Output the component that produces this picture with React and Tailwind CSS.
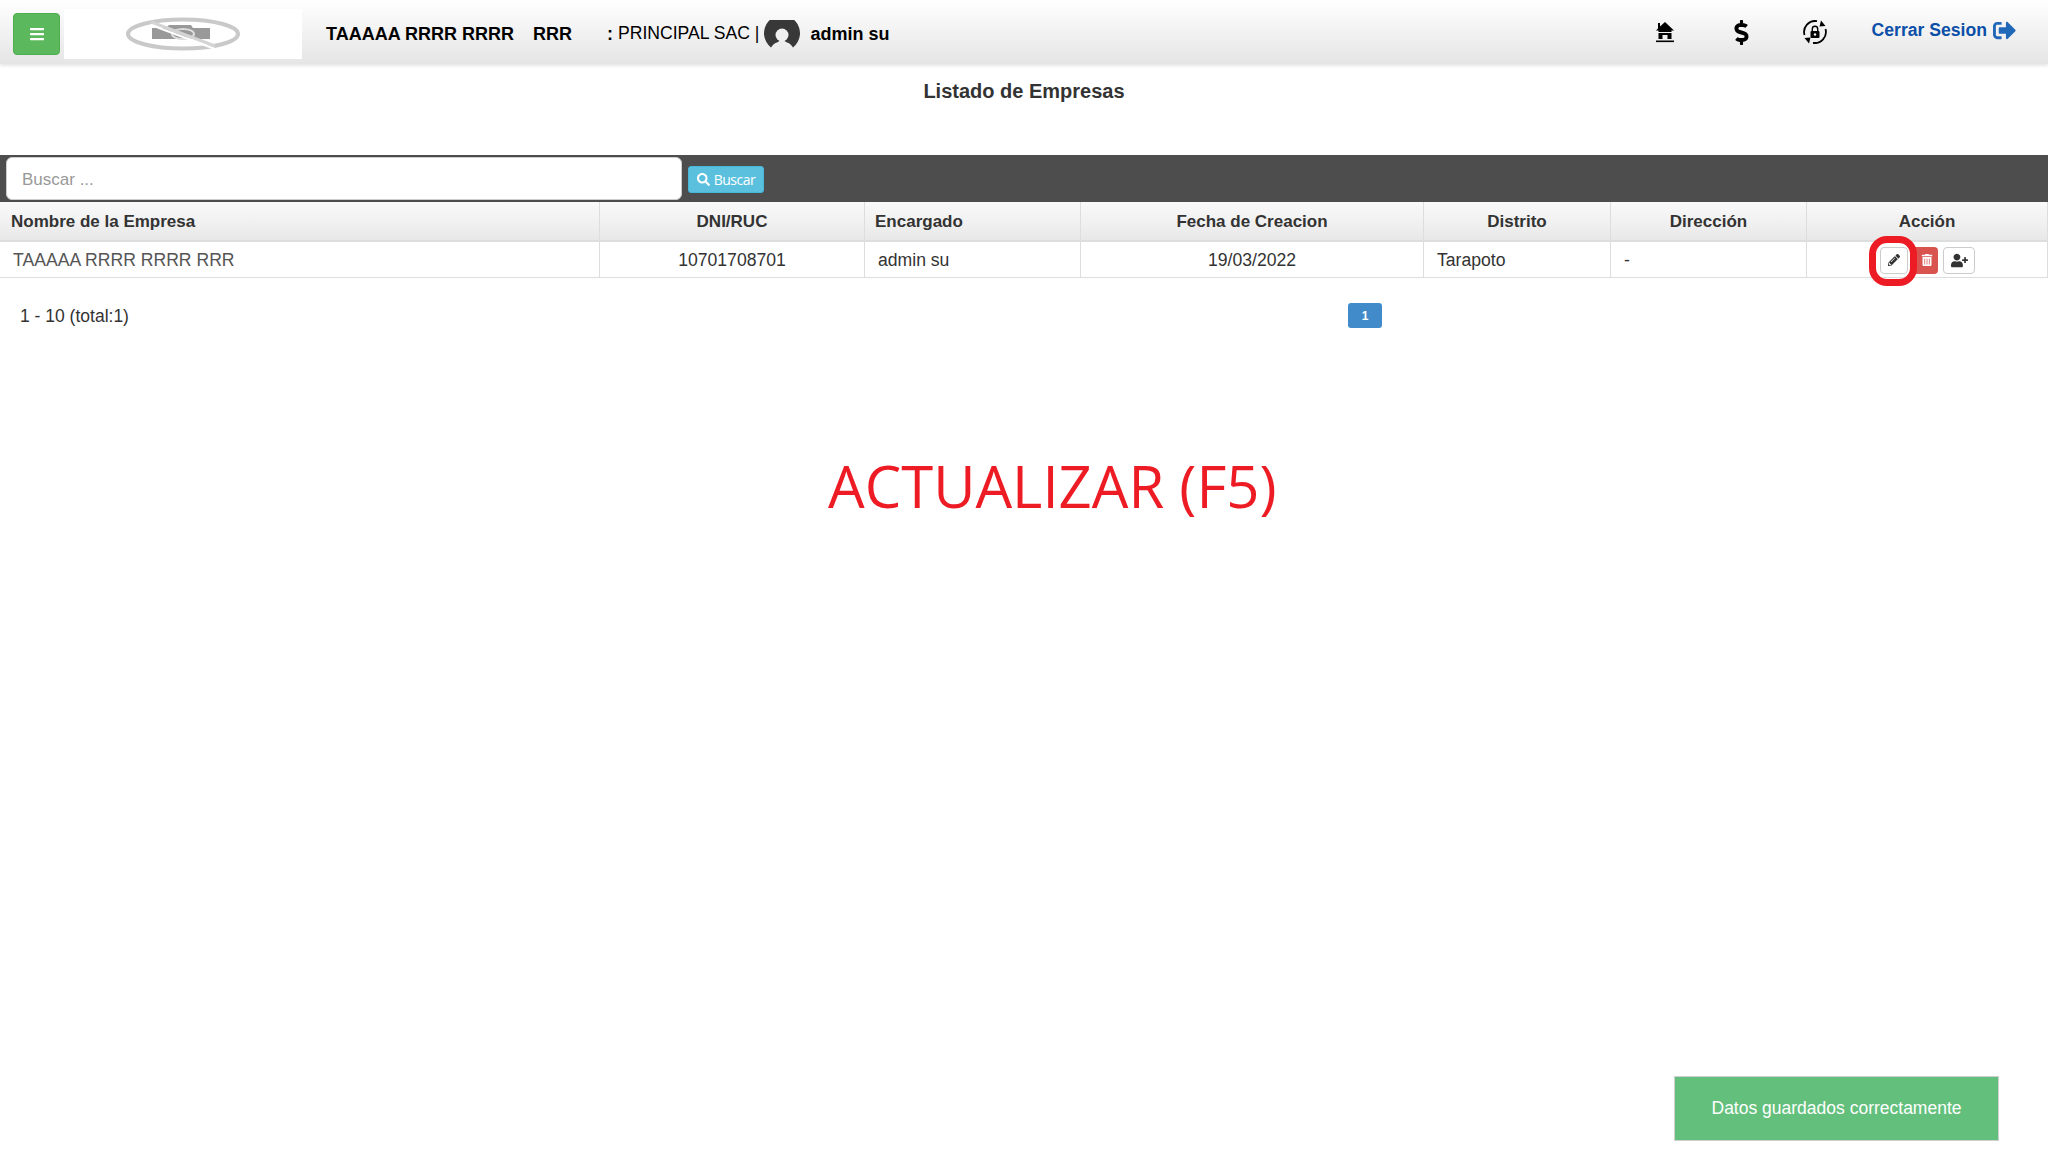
import React from 'react';
import { FaBars, FaDollarSign, FaSearch, FaPencilAlt, FaTrashAlt, FaUserPlus, FaSignOutAlt } from 'react-icons/fa';

const columns = [
  { label: 'Nombre de la Empresa', width: 'w-[600px]', head: 'text-left pl-[11px]' },
  { label: 'DNI/RUC', width: 'w-[265px]', head: 'text-center' },
  { label: 'Encargado', width: 'w-[216px]', head: 'text-left pl-[10px]' },
  { label: 'Fecha de Creacion', width: 'w-[343px]', head: 'text-center' },
  { label: 'Distrito', width: 'w-[187px]', head: 'text-center' },
  { label: 'Dirección', width: 'w-[196px]', head: 'text-center' },
  { label: 'Acción', width: 'flex-1', head: 'text-center' },
];

const LogoPlaceholder = () => (
  <svg width="116" height="34" viewBox="0 0 116 34">
    <ellipse cx="58" cy="17" rx="55" ry="14.5" fill="none" stroke="#c9c9c9" strokeWidth="4" />
    <path d="M27 11h14l3-3h22l2 3h17v11H27z" fill="#999" />
    <ellipse cx="58" cy="17" rx="11" ry="5" fill="none" stroke="#ddd" strokeWidth="2" />
    <path d="M26 5l64 24" stroke="#d4d4d4" strokeWidth="3" />
    <path d="M26 8l64 24" stroke="#fff" strokeWidth="2" />
  </svg>
);

const Avatar = () => (
  <svg width="36" height="30" viewBox="0 0 36 30">
    <path d="M7 27.5A18 18 0 1 1 29 27.5C27 24.5 25 23 23 22.5A8 8 0 0 0 13 22.5C11 23 9 24.5 7 27.5z" fill="#383838" />
    <circle cx="18" cy="15" r="6.5" fill="#f0f0f0" />
  </svg>
);

const HomeIcon = () => (
  <svg width="20" height="24" viewBox="0 0 20 24" fill="#000">
    <path d="M10 2l9 8.5h-2.5V12h-13v-1.5H1L3 8.5V3h2v3.5z" />
    <path d="M3.5 13h13v6h-4v-4h-5v4h-4z" />
    <rect x="1" y="20.5" width="18" height="1.6" />
  </svg>
);

const LockRotate = () => (
  <svg width="26" height="26" viewBox="0 0 26 26" fill="none">
    <path d="M2.5 16A11 11 0 0 1 15 2.2" stroke="#000" strokeWidth="1.8" />
    <path d="M23.5 10A11 11 0 0 1 11 23.8" stroke="#000" strokeWidth="1.8" />
    <path d="M19 1.5l4.5 5.5-6 .5z M7 24.5l-4.5-5.5 6-.5z" fill="#000" />
    <rect x="8.5" y="12" width="9" height="7" rx="1" fill="#000" />
    <circle cx="13" cy="15.5" r="1.2" fill="#f2f2f2" />
    <path d="M10.3 12V10a2.7 2.7 0 0 1 5.4 0v2" stroke="#000" strokeWidth="1.4" />
  </svg>
);

const Navbar = () => (
  <header className="h-[64px] pt-[4px] flex items-center bg-gradient-to-b from-white to-[#e6e5e5] shadow-[0_1px_4px_rgba(0,0,0,0.15)] font-['Liberation_Sans',sans-serif] text-black">
    <button className="ml-[13px] w-[47px] h-[42px] rounded-[4px] bg-[#5cb85c] border border-[#4cae4c] flex items-center justify-center text-white">
      <FaBars size={16} />
    </button>
    <div className="ml-[4px] w-[238px] h-[50px] bg-white flex items-center justify-center">
      <LogoPlaceholder />
    </div>
    <div className="ml-[24px] flex items-center text-[18px] leading-none">
      <b>TAAAAA RRRR RRRR</b>
      <b className="ml-[19px]">RRR</b>
      <b className="ml-[35px]">:</b>
      <span className="ml-[5px] text-[17.6px]">PRINCIPAL SAC |</span>
      <span className="ml-[5px] mt-[2px]"><Avatar /></span>
      <b className="ml-[10px]">admin su</b>
    </div>
    <div className="ml-auto -mt-[4px] flex items-center mr-[32px]">
      <span className="ml-[1px]"><HomeIcon /></span>
      <span className="ml-[54px]"><FaDollarSign size={25} /></span>
      <span className="ml-[48px]"><LockRotate /></span>
      <a className="ml-[44px] flex items-center text-[17.6px] font-bold text-[#0b4fa8] -mt-[3px]">
        Cerrar Sesion
        <FaSignOutAlt size={23} className="ml-[6px] text-[#2268b8]" />
      </a>
    </div>
  </header>
);

const ActionButtons = () => (
  <div className="flex items-center h-full pl-[73px] pt-[1px]">
    <div className="relative z-10">
      <button className="w-[28px] h-[27px] rounded-[4px] bg-white border border-[#cccccc] flex items-center justify-center text-[#333]">
        <FaPencilAlt size={12} />
      </button>
      {/* Marca roja sobre el boton editar */}
      <div className="absolute -left-[11px] -top-[11px] w-[48px] h-[50px] rounded-[18px] border-[7px] border-[#ed1c24]"></div>
    </div>
    <button className="ml-[2px] w-[28px] h-[27px] pl-[6px] rounded-[4px] bg-[#d9534f] flex items-center justify-center text-white">
      <FaTrashAlt size={12} />
    </button>
    <button className="ml-[5px] w-[32px] h-[27px] rounded-[4px] bg-white border border-[#cccccc] flex items-center justify-center text-[#333]">
      <FaUserPlus size={17} />
    </button>
  </div>
);

const Table = () => (
  <div className="text-[#333]">
    <div className="flex h-[40px] bg-gradient-to-b from-[#fafafa] to-[#e8e8e8] border-b-2 border-[#dddddd]">
      {columns.map((col) => (
        <div key={col.label} className={`${col.width} ${col.head} border-r border-[#dddddd] text-[17px] font-bold leading-[39px]`}>
          {col.label}
        </div>
      ))}
    </div>
    <div className="flex h-[36px] border-b border-[#dddddd] text-[17.6px] leading-[37px]">
      <div className="w-[600px] pl-[13px] border-r border-[#dddddd] text-[#555]">TAAAAA RRRR RRRR RRR</div>
      <div className="w-[265px] text-center border-r border-[#dddddd]">10701708701</div>
      <div className="w-[216px] pl-[13px] border-r border-[#dddddd]">admin su</div>
      <div className="w-[343px] text-center border-r border-[#dddddd]">19/03/2022</div>
      <div className="w-[187px] pl-[13px] border-r border-[#dddddd]">Tarapoto</div>
      <div className="w-[196px] pl-[13px] border-r border-[#dddddd]">-</div>
      <div className="flex-1 border-r border-[#dddddd]"><ActionButtons /></div>
    </div>
  </div>
);

const App = () => {
  return (
    <div className="relative min-h-[1152px] bg-white font-['Liberation_Sans',sans-serif]">
      <Navbar />

      <h1 className="h-[91px] pt-[15px] text-center text-[20px] leading-[24px] font-bold text-[#333]">
        Listado de Empresas
      </h1>

      {/* Buscador */}
      <div className="h-[47px] bg-[#4d4d4d] flex items-center pl-[6px]">
        <div className="w-[676px] h-[43px] bg-white rounded-[6px] border border-[#cccccc] pl-[15px] pt-[2px] flex items-center text-[17px] text-[#999]">
          Buscar ...
        </div>
        <button className="ml-[6px] w-[76px] h-[27px] mt-[2px] rounded-[3px] bg-[#5bc0de] border border-[#46b8da] flex items-center justify-center text-white text-[14px] font-['Open_Sans',sans-serif]">
          <FaSearch size={13} className="mr-[4px]" />
          <span className="tracking-[-0.5px]">Buscar</span>
        </button>
      </div>

      <Table />

      {/* Paginacion */}
      <div className="relative h-[76px] flex items-center pl-[20px] text-[17.5px] text-[#333]">
        1 - 10 (total:1)
        <div className="absolute left-[1348px] top-[25px] w-[34px] h-[25px] rounded-[3px] bg-[#428bca] text-white text-[12px] font-bold flex items-center justify-center">
          1
        </div>
      </div>

      <p className="absolute left-[828px] top-[446px] text-[58px] leading-[80px] text-[#ed1c24] font-['Open_Sans',sans-serif] whitespace-nowrap">
        ACTUALIZAR (F5)
      </p>

      <div className="absolute left-[1674px] top-[1076px] w-[325px] h-[65px] bg-[#63c07c] border border-[#cfcfcf] flex items-center justify-center text-white text-[17.5px]">
        Datos guardados correctamente
      </div>
    </div>
  );
};

export default App;
